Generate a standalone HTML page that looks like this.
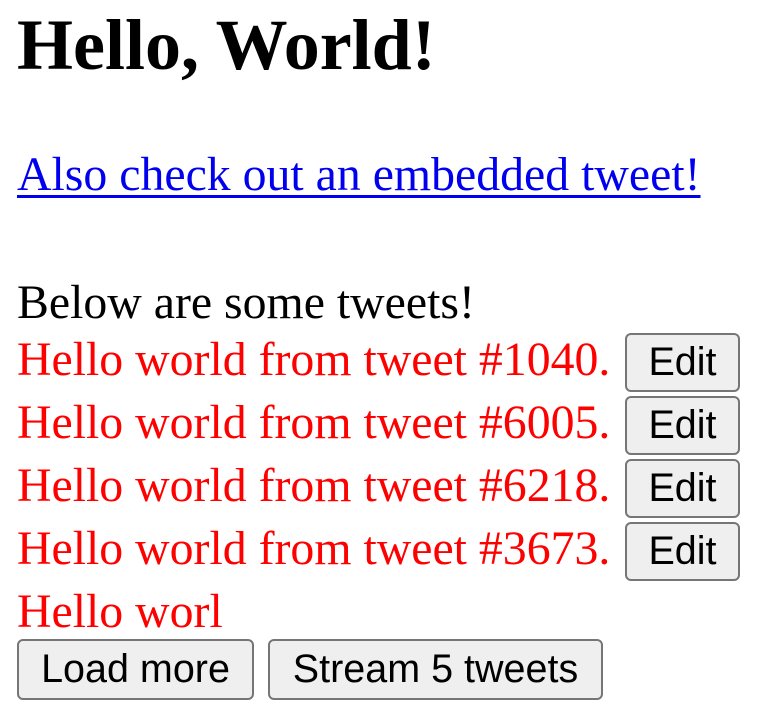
<!DOCTYPE html>
<html><head><meta charset="utf-8"><style>
html,body{margin:0;padding:0;background:#fff;width:762px;height:726px;overflow:hidden}
.t{position:absolute;left:17px;font-family:"Liberation Serif",serif;font-size:47.8px;line-height:1.107;white-space:nowrap}
.r{color:#f00}
.b{position:absolute;box-sizing:border-box;border:2px solid #767676;border-radius:6px;background:#efefef;font-family:"Liberation Sans",sans-serif;font-size:39.5px;color:#000;display:flex;align-items:center;justify-content:center;padding-bottom:1px}
</style></head><body>
<div class="t" style="top:6px;font-size:72px;font-weight:bold">Hello, World!</div>
<div class="t" style="top:149px;color:#00e;text-decoration:underline;text-decoration-thickness:3px;text-underline-offset:5px">Also check out an embedded tweet!</div>
<div class="t" style="top:277px">Below are some tweets!</div>
<div class="t r" style="top:334px">Hello world from tweet #1040.</div>
<div class="t r" style="top:397px">Hello world from tweet #6005.</div>
<div class="t r" style="top:460px">Hello world from tweet #6218.</div>
<div class="t r" style="top:523px">Hello world from tweet #3673.</div>
<div class="t r" style="top:586px">Hello worl</div>
<div class="b" style="left:625px;top:333px;width:115px;height:59px">Edit</div>
<div class="b" style="left:625px;top:396px;width:115px;height:59px">Edit</div>
<div class="b" style="left:625px;top:459px;width:115px;height:59px">Edit</div>
<div class="b" style="left:625px;top:522px;width:115px;height:59px">Edit</div>
<div class="b" style="left:17px;top:639px;width:237px;height:61px">Load more</div>
<div class="b" style="left:268px;top:639px;width:335px;height:61px">Stream 5 tweets</div>
</body></html>
